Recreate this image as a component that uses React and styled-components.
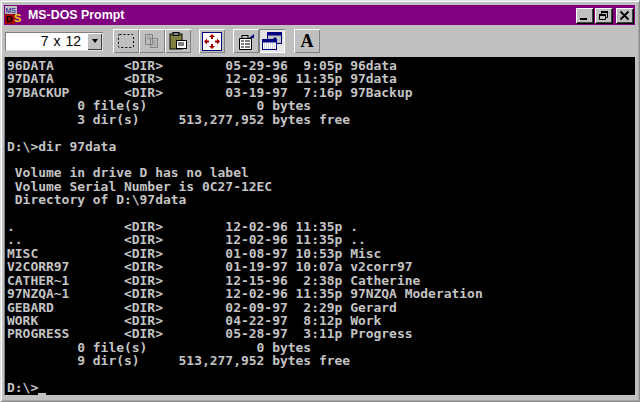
import React from "react";
import styled, { createGlobalStyle } from "styled-components";

const Global = createGlobalStyle`
  html, body { margin: 0; padding: 0; background: #c0c0c0; overflow: hidden; }
  #root { width: 640px; height: 402px; }
`;

const Window = styled.div`
  box-sizing: border-box;
  width: 640px;
  height: 402px;
  display: flex;
  flex-direction: column;
  background: #c0c0c0;
  border: 1px solid #dfdfdf;
  border-right-color: #8a8a8a;
  border-bottom-color: #8a8a8a;
  box-shadow: inset 1px 1px 0 #fff, inset -1px -1px 0 #a8a8a8;
  padding: 4px 4px 6px 3px;
`;

const TitleBar = styled.div`
  height: 20px;
  flex: none;
  background: #800080;
  display: flex;
  align-items: center;
  padding: 0 2px 0 1px;
  gap: 2px;
`;

const TitleText = styled.span`
  font: bold 12.4px "Liberation Sans", Arial, sans-serif;
  color: #fff;
  flex: 1;
`;

const WinButton = styled.button`
  width: 17px;
  height: 15px;
  margin-left: ${(p) => p.$gap || 0}px;
  padding: 0;
  background: #c0c0c0;
  border: none;
  box-shadow: inset 1px 1px 0 #fff, inset -1px -1px 0 #404040, 1px 1px 0 #000;
  display: flex;
  align-items: center;
  justify-content: center;
`;

const Toolbar = styled.div`
  height: 32px;
  flex: none;
  display: flex;
  align-items: center;
  padding: 0 0 0 1px;
`;

const Combo = styled.div`
  width: 98px;
  height: 19px;
  box-sizing: border-box;
  background: #fff;
  display: flex;
  align-items: center;
  box-shadow: inset 1px 1px 0 #808080, inset -1px -1px 0 #dfdfdf;
  margin-right: 10px;
  padding: 1px;
`;

const ComboValue = styled.span`
  flex: 1;
  text-align: right;
  padding-right: 6px;
  font: 14px "Liberation Sans", Arial, sans-serif;
  color: #000;
  word-spacing: 1px;
`;

const ComboArrow = styled.span`
  width: 15px;
  height: 17px;
  background: #c0c0c0;
  box-shadow: inset 1px 1px 0 #fff, inset -1px -1px 0 #404040;
  display: flex;
  align-items: center;
  justify-content: center;
  &::after {
    content: "";
    border-left: 3px solid transparent;
    border-right: 3px solid transparent;
    border-top: 4px solid #000;
  }
`;

const ToolButton = styled.button`
  width: 26px;
  height: 24px;
  padding: 0;
  margin-left: ${(p) => p.$gap || 0}px;
  border: none;
  background: ${(p) => (p.$active ? "#e4e4e4" : "#c0c0c0")};
  box-shadow: ${(p) =>
    p.$active
      ? "inset 1px 1px 0 #808080, inset -1px -1px 0 #fff"
      : "inset 1px 1px 0 #fff, inset -1px -1px 0 #808080"};
  display: flex;
  align-items: center;
  justify-content: center;
`;

const LetterA = styled.span`
  font: bold 18px "Liberation Serif", "Times New Roman", serif;
  color: #000;
  line-height: 1;
`;

const Terminal = styled.pre`
  flex: 1;
  min-height: 0;
  margin: 0;
  padding: 2px 0 0 3px;
  background: #000;
  color: #c4c4c4;
  font: bold 12.96px/13.42px "DejaVu Sans Mono", "Liberation Mono", monospace;
  overflow: hidden;
  box-shadow: inset 1px 0 0 #808080;
  white-space: pre;
`;

const Cursor = styled.span`
  display: inline-block;
  width: 8px;
  height: 2px;
  background: #c4c4c4;
  vertical-align: -3px;
`;

const lines = `96DATA         <DIR>        05-29-96  9:05p 96data
97DATA         <DIR>        12-02-96 11:35p 97data
97BACKUP       <DIR>        03-19-97  7:16p 97Backup
         0 file(s)              0 bytes
         3 dir(s)     513,277,952 bytes free

D:\\>dir 97data

 Volume in drive D has no label
 Volume Serial Number is 0C27-12EC
 Directory of D:\\97data

.              <DIR>        12-02-96 11:35p .
..             <DIR>        12-02-96 11:35p ..
MISC           <DIR>        01-08-97 10:53p Misc
V2CORR97       <DIR>        01-19-97 10:07a v2corr97
CATHER~1       <DIR>        12-15-96  2:38p Catherine
97NZQA~1       <DIR>        12-02-96 11:35p 97NZQA Moderation
GEBARD         <DIR>        02-09-97  2:29p Gerard
WORK           <DIR>        04-22-97  8:12p Work
PROGRESS       <DIR>        05-28-97  3:11p Progress
         0 file(s)              0 bytes
         9 dir(s)     513,277,952 bytes free

D:\\>`;

const LogoIcon = () => (
  <svg width="21" height="18" viewBox="0 0 21 18">
    <rect x="0" y="0" width="12" height="8" fill="#c0c0c0" />
    <rect x="0" y="8" width="10" height="10" fill="#a00000" />
    <text x="0.5" y="7" fontFamily="Liberation Sans" fontSize="7" fill="#000080">MS</text>
    <text x="9" y="15.5" fontFamily="Liberation Sans" fontWeight="bold" fontSize="11" fill="#f0d000">S</text>
    <text x="1" y="16" fontFamily="Liberation Sans" fontWeight="bold" fontSize="9" fill="#000">D</text>
  </svg>
);

const MarkIcon = () => (
  <svg width="18" height="16" viewBox="0 0 18 16">
    <rect x="1.5" y="1.5" width="15" height="13" rx="1" fill="none" stroke="#000" strokeDasharray="2 2" />
  </svg>
);

const CopyIcon = () => (
  <svg width="18" height="16" viewBox="0 0 18 16">
    <path d="M2.5 1.5h7v10h-7zM7.5 5.5h7v9h-7z" fill="#c0c0c0" stroke="#808080" />
    <path d="M4 4h4M4 6h3M9 8h4M9 10h4M9 12h4" stroke="#909090" />
  </svg>
);

const PasteIcon = () => (
  <svg width="20" height="18" viewBox="0 0 20 18">
    <rect x="2" y="2" width="12" height="15" fill="#808040" stroke="#000" />
    <rect x="5" y="0.5" width="6" height="3" fill="#808080" stroke="#000" />
    <rect x="8.5" y="8.5" width="10" height="8" fill="#fff" stroke="#000" />
    <path d="M10 11h6M10 13h6" stroke="#000" />
  </svg>
);

const FullIcon = () => (
  <svg width="20" height="19" viewBox="0 0 20 19">
    <rect x="0.5" y="0.5" width="19" height="18" fill="#fff" stroke="#000080" />
    <path d="M10 2l3 3h-2v2H9V5H7zM10 17l-3-3h2v-2h2v2h2zM2 9.5l3-3v2h2v2H5v2zM18 9.5l-3 3v-2h-2v-2h2v-2z" fill="#a00000" />
  </svg>
);

const PropsIcon = () => (
  <svg width="20" height="19" viewBox="0 0 20 19">
    <path d="M3.5 6.5h12v11h-12z" fill="#fff" stroke="#000" />
    <path d="M5 9h3M9 9h5M5 12h3M9 12h5M5 15h3M9 15h5" stroke="#000" />
    <rect x="6" y="3.5" width="6" height="3" fill="#c0c0c0" stroke="#000" />
    <path d="M13 6l5-4v4z" fill="#000080" />
  </svg>
);

const BackgroundIcon = () => (
  <svg width="22" height="20" viewBox="0 0 22 20">
    <rect x="6.5" y="1.5" width="14" height="11" fill="#c0c0c0" stroke="#000080" />
    <rect x="6.5" y="1.5" width="14" height="3" fill="#000080" />
    <path d="M12 8l2-2 2 2z" fill="#000080" />
    <rect x="1.5" y="8.5" width="14" height="10" fill="#fff" stroke="#000080" />
    <rect x="1.5" y="8.5" width="14" height="3" fill="#000080" />
    <path d="M3 13h11M3 15h11M3 17h11" stroke="#a0a0c0" strokeDasharray="1 1" />
  </svg>
);

const MinIcon = () => (
  <svg width="11" height="11" viewBox="0 0 11 11"><rect x="1" y="8" width="7" height="2" fill="#000" /></svg>
);
const RestoreIcon = () => (
  <svg width="11" height="11" viewBox="0 0 11 11">
    <path d="M3.5 2.5h6v5h-2M3.5 2.5v2" fill="none" stroke="#000" />
    <rect x="3" y="1" width="7" height="2" fill="#000" />
    <path d="M1.5 4.5h6v5h-6z" fill="none" stroke="#000" />
    <rect x="1" y="4" width="7" height="2" fill="#000" />
  </svg>
);
const CloseIcon = () => (
  <svg width="11" height="11" viewBox="0 0 11 11">
    <path d="M1.5 1.5l8 8M9.5 1.5l-8 8" stroke="#000" strokeWidth="1.8" />
  </svg>
);

export default function App() {
  return (
    <>
      <Global />
      <Window>
        <TitleBar>
          <LogoIcon />
          <TitleText>MS-DOS Prompt</TitleText>
          <WinButton><MinIcon /></WinButton>
          <WinButton><RestoreIcon /></WinButton>
          <WinButton $gap={2}><CloseIcon /></WinButton>
        </TitleBar>
        <Toolbar>
          <Combo>
            <ComboValue>7 x 12</ComboValue>
            <ComboArrow />
          </Combo>
          <ToolButton><MarkIcon /></ToolButton>
          <ToolButton><CopyIcon /></ToolButton>
          <ToolButton><PasteIcon /></ToolButton>
          <ToolButton $gap={8}><FullIcon /></ToolButton>
          <ToolButton $gap={8}><PropsIcon /></ToolButton>
          <ToolButton $active><BackgroundIcon /></ToolButton>
          <ToolButton $gap={9}><LetterA>A</LetterA></ToolButton>
        </Toolbar>
        <Terminal>{lines}<Cursor /></Terminal>
      </Window>
    </>
  );
}
